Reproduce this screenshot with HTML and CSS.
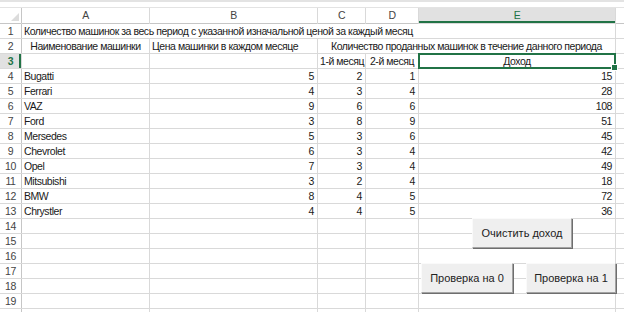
FILE: index.html
```html
<!DOCTYPE html>
<html>
<head>
<meta charset="utf-8">
<title>Доход</title>
<link rel="stylesheet" href="styles.css">
</head>
<body>
<div class="page">
	<div class="bar"></div>
	<div class="sheet">
		<div class="corner"><span></span></div>
		<div class="hd">A</div><div class="hd">B</div><div class="hd">C</div><div class="hd">D</div><div class="hd sel">E</div><div class="hd"></div>

		<div class="rh">1</div><div class="c span5">Количество машинок за весь период с указанной изначальной ценой за каждый месяц</div><div class="c"></div>
		<div class="rh">2</div><div class="c ctr">Наименование машинки</div><div class="c">Цена машинки в каждом месяце</div><div class="c ctr span3">Количество проданных машинок в течение данного периода</div><div class="c"></div>
		<div class="rh sel">3</div><div class="c"></div><div class="c"></div><div class="c ctr">1-й месяц</div><div class="c ctr">2-й месяц</div><div class="c ctr active">Доход</div><div class="c"></div>

		<div class="rh">4</div><div class="c">Bugatti</div><div class="c num">5</div><div class="c num">2</div><div class="c num">1</div><div class="c num">15</div><div class="c"></div>
		<div class="rh">5</div><div class="c">Ferrari</div><div class="c num">4</div><div class="c num">3</div><div class="c num">4</div><div class="c num">28</div><div class="c"></div>
		<div class="rh">6</div><div class="c">VAZ</div><div class="c num">9</div><div class="c num">6</div><div class="c num">6</div><div class="c num">108</div><div class="c"></div>
		<div class="rh">7</div><div class="c">Ford</div><div class="c num">3</div><div class="c num">8</div><div class="c num">9</div><div class="c num">51</div><div class="c"></div>
		<div class="rh">8</div><div class="c">Mersedes</div><div class="c num">5</div><div class="c num">3</div><div class="c num">6</div><div class="c num">45</div><div class="c"></div>
		<div class="rh">9</div><div class="c">Chevrolet</div><div class="c num">6</div><div class="c num">3</div><div class="c num">4</div><div class="c num">42</div><div class="c"></div>
		<div class="rh">10</div><div class="c">Opel</div><div class="c num">7</div><div class="c num">3</div><div class="c num">4</div><div class="c num">49</div><div class="c"></div>
		<div class="rh">11</div><div class="c">Mitsubishi</div><div class="c num">3</div><div class="c num">2</div><div class="c num">4</div><div class="c num">18</div><div class="c"></div>
		<div class="rh">12</div><div class="c">BMW</div><div class="c num">8</div><div class="c num">4</div><div class="c num">5</div><div class="c num">72</div><div class="c"></div>
		<div class="rh">13</div><div class="c">Chrystler</div><div class="c num">4</div><div class="c num">4</div><div class="c num">5</div><div class="c num">36</div><div class="c"></div>

		<div class="rh">14</div><div class="c"></div><div class="c"></div><div class="c"></div><div class="c"></div><div class="c"></div><div class="c"></div>
		<div class="rh">15</div><div class="c"></div><div class="c"></div><div class="c"></div><div class="c"></div><div class="c"></div><div class="c"></div>
		<div class="rh">16</div><div class="c"></div><div class="c"></div><div class="c"></div><div class="c"></div><div class="c"></div><div class="c"></div>
		<div class="rh">17</div><div class="c"></div><div class="c"></div><div class="c"></div><div class="c"></div><div class="c"></div><div class="c"></div>
		<div class="rh">18</div><div class="c"></div><div class="c"></div><div class="c"></div><div class="c"></div><div class="c"></div><div class="c"></div>
		<div class="rh">19</div><div class="c"></div><div class="c"></div><div class="c"></div><div class="c"></div><div class="c"></div><div class="c"></div>
		<div class="rh"></div><div class="c"></div><div class="c"></div><div class="c"></div><div class="c"></div><div class="c"></div><div class="c"></div>
	</div>

	<div class="btn clear">Очистить доход</div>
	<div class="btn check0">Проверка на 0</div>
	<div class="btn check1">Проверка на 1</div>
</div>
</body>
</html>
```

FILE: styles.css
```css
body{
	margin:0;
	background:#fff;
	font-family:"Liberation Sans", Arial, sans-serif;
	font-size:10.5px;
	color:#1a1a1a;
	overflow:hidden;
}
.page{
	position:relative;
	width:624px;
	height:312px;
	overflow:hidden;
}
.bar{
	height:2px;
	margin-bottom:5px;
	background:#e3e3e3;
}
.sheet{
	display:grid;
	grid-template-columns:21px 127px 167px 47px 52px 196px 1fr;
	grid-template-rows:15px;
	grid-auto-rows:14px;
	gap:1px;
	background:#d9d9d9;
	border-top:1px solid #e3e3e3;
}
.sheet>div{
	background:#fff;
	line-height:14px;
	white-space:nowrap;
	overflow:hidden;
	letter-spacing:-0.45px;
}
.corner{
	position:relative;
	box-shadow:0 1px 0 #c6c6c6, 1px 0 0 #c6c6c6;
}
.corner>span{
	position:absolute;
	right:2px;
	bottom:2px;
	width:0;
	height:0;
	border-left:8px solid transparent;
	border-bottom:8px solid #dcdcdc;
}
.hd{
	text-align:center;
	color:#444;
	line-height:15px !important;
	box-shadow:0 1px 0 #c6c6c6;
}
.hd.sel{
	background:#e1e1e1 !important;
	color:#217346;
	box-shadow:inset 0 -2px 0 #217346;
}
.rh{
	text-align:center;
	color:#444;
	box-shadow:1px 0 0 #c6c6c6;
}
.rh.sel{
	background:#e1e1e1 !important;
	color:#217346;
	font-weight:bold;
	box-shadow:inset -2px 0 0 #217346;
}
.c{
	padding:0 2px;
}
.ctr{
	text-align:center;
}
.num{
	text-align:right;
	padding-right:3px;
}
.span5{
	grid-column:span 5;
}
.span3{
	grid-column:span 3;
}
.sheet>.active{
	position:relative;
	overflow:visible;
}
.active::before{
	content:"";
	position:absolute;
	left:-1px;
	top:-1px;
	right:-1px;
	bottom:-1px;
	border:2px solid #217346;
}
.active::after{
	content:"";
	position:absolute;
	right:-3px;
	bottom:-3px;
	width:5px;
	height:5px;
	background:#217346;
	border:1px solid #fff;
}

.btn{
	position:absolute;
	box-sizing:border-box;
	display:flex;
	align-items:center;
	justify-content:center;
	background:#efefef;
	border:1px solid;
	border-color:#fafafa #a3a3a3 #a3a3a3 #fafafa;
	box-shadow:1px 1px 0 #6e6e6e;
	font-size:11px;
	color:#222;
}
.clear{
	left:472px;
	top:218px;
	width:100px;
	height:30px;
}
.check0{
	left:421px;
	top:263px;
	width:92px;
	height:30px;
}
.check1{
	left:526px;
	top:263px;
	width:90px;
	height:30px;
}
```
